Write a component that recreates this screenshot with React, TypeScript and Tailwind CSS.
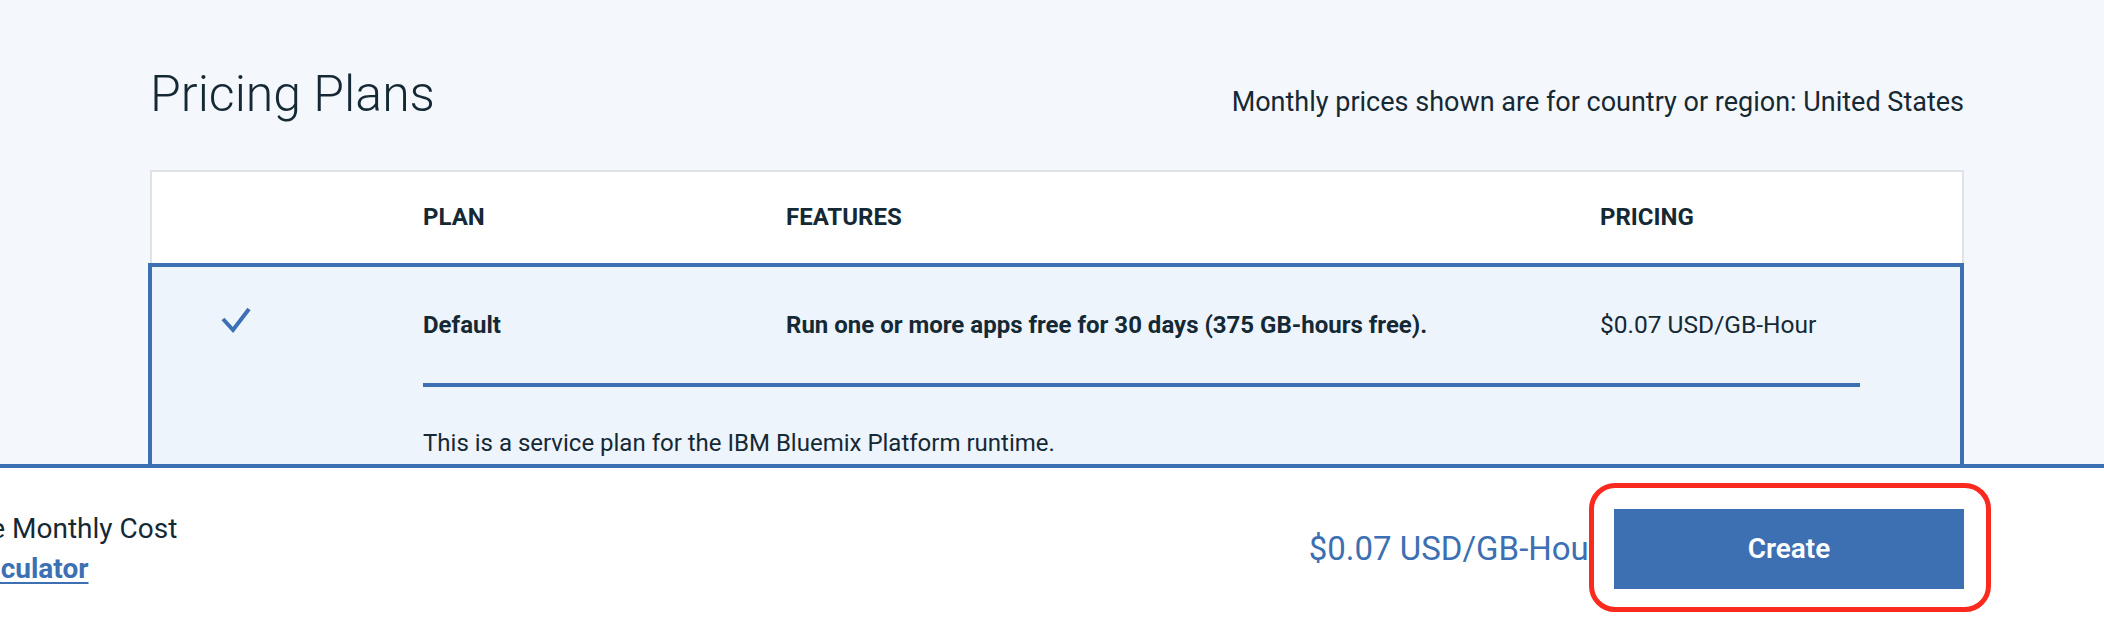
import React from "react";

const font = { fontFamily: "Roboto, 'Liberation Sans', sans-serif" };

export default function App() {
  return (
    <div
      className="flex h-[630px] w-[2104px] flex-col overflow-hidden bg-[#f4f7fb] text-[#152935]"
      style={font}
    >
      {/* Main content */}
      <main className="flex-1 overflow-hidden pl-[150px] pr-[140px] pt-[66px]">
        <div className="flex items-baseline justify-between">
          <h1 className="text-[50px] font-light leading-[56px]">Pricing Plans</h1>
          <p className="text-[27px] leading-[40px]">
            Monthly prices shown are for country or region: United States
          </p>
        </div>

        <div className="mt-[48px]">
          {/* Header row */}
          <div className="grid grid-cols-[271px_363px_814px_1fr] border-x-2 border-t-2 border-[#dfe3e6] bg-white pt-[29px] pb-[30px] text-[24px] font-bold leading-[32px]">
            <div />
            <div>PLAN</div>
            <div>FEATURES</div>
            <div>PRICING</div>
          </div>

          {/* Selected row */}
          <div className="ml-[-2px] border-4 border-[#3d70b2] bg-[#eef4fc] pt-[42px] pb-[40px]">
            <div className="grid grid-cols-[271px_363px_814px_1fr] text-[24px] leading-[32px]">
              <div className="pl-[69px]">
                <svg
                  width="30"
                  height="28"
                  viewBox="0 0 30 28"
                  fill="none"
                  className="mt-[-3px]"
                >
                  <polyline
                    points="2,13 12,24 28,3"
                    stroke="#3d70b2"
                    strokeWidth="4"
                    strokeLinecap="butt"
                    strokeLinejoin="miter"
                  />
                </svg>
              </div>
              <div className="font-bold">Default</div>
              <div className="font-bold">
                Run one or more apps free for 30 days (375 GB-hours free).
              </div>
              <div className="text-[24.5px]">$0.07 USD/GB-Hour</div>

              <div />
              <div className="col-span-3 mr-[100px] mt-[42px] h-[4px] bg-[#3d70b2]" />

              <div />
              <div className="col-span-3 mt-[40px]">
                This is a service plan for the IBM Bluemix Platform runtime.
              </div>
            </div>
          </div>
        </div>
      </main>

      {/* Footer */}
      <footer className="flex h-[166px] shrink-0 items-center justify-between border-t-4 border-[#3d70b2] bg-white pr-[140px]">
        <div className="ml-[-105px] text-[28px] leading-[40px]">
          <div className="whitespace-nowrap">Estimate Monthly Cost</div>
          <a className="whitespace-nowrap font-bold text-[#3d70b2] underline decoration-2 underline-offset-[4px]">
            Cost Calculator
          </a>
        </div>
        <div className="flex items-center gap-[14px]">
          <span className="relative z-0 whitespace-nowrap text-[33px] leading-[40px] text-[#3d70b2]">
            $0.07 USD/GB-Hour
          </span>
          <div className="relative">
            <div className="absolute -left-[25px] -top-[26px] -right-[27px] -bottom-[23px] z-10 rounded-[26px] border-[5px] border-[#fb2a1f] bg-white" />
            <button className="relative z-20 flex h-[80px] w-[350px] items-center justify-center bg-[#3d70b2] text-[28px] font-semibold text-white">
              Create
            </button>
          </div>
        </div>
      </footer>
    </div>
  );
}
